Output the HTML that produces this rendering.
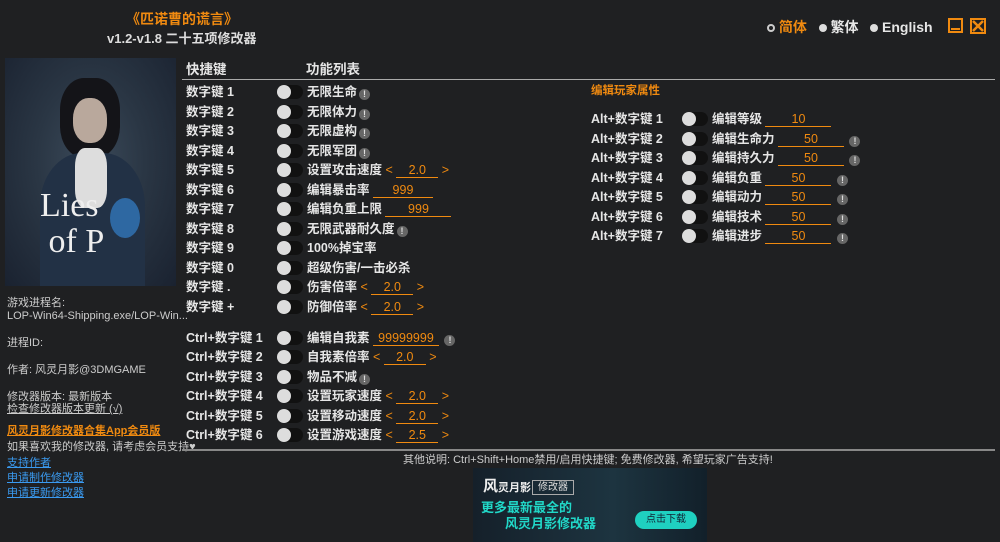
<!DOCTYPE html>
<html><head><meta charset="utf-8"><style>
*{margin:0;padding:0;box-sizing:border-box}
body{width:1000px;height:542px;background:#1f2022;font-family:"Liberation Sans","Noto Sans CJK SC",sans-serif;color:#e6e6e6;position:relative;overflow:hidden;font-size:12px;line-height:14px}
.a{position:absolute;white-space:nowrap}
.b{font-weight:bold}
.o{color:#f08a10}
.k{position:absolute;left:186px;font-weight:bold;font-size:12.5px;line-height:14px}
.tg{position:absolute;left:277px;width:26px;height:14px;background:#111;border-radius:7px}
.tg:before{content:"";position:absolute;left:0;top:0;width:14px;height:14px;border-radius:50%;background:#ddd}
.l{position:absolute;font-weight:bold;font-size:12.5px;line-height:14px;white-space:nowrap}
.ex{display:inline-block;width:11px;height:11px;border-radius:50%;background:#666;color:#ddd;font-size:9px;text-align:center;line-height:11px;vertical-align:-1px;margin-left:2px}
.v{display:inline-block;border-bottom:1px solid #f08a10;color:#f08a10;text-align:center;font-weight:normal;line-height:13px}
.ar{color:#f08a10;font-weight:normal}
.s{font-size:11px;color:#ccc;line-height:13px}
.u{text-decoration:underline}
.bl{color:#3a9af0;text-decoration:underline}
</style></head><body>
<div class="a b o" style="left:126px;top:11px;font-size:14px;line-height:17px">《匹诺曹的谎言》</div>
<div class="a b" style="left:107px;top:31px;font-size:13px;line-height:16px;color:#ddd">v1.2-v1.8 二十五项修改器</div>
<div class="a b" style="left:767px;top:19px;font-size:14px;line-height:17px"><span style="display:inline-block;width:8px;height:8px;border:2px solid #ccc;border-radius:50%"></span> <span class="o">简体</span>&nbsp;&nbsp; <span style="display:inline-block;width:8px;height:8px;background:#ddd;border-radius:50%"></span> 繁体&nbsp;&nbsp; <span style="display:inline-block;width:8px;height:8px;background:#ddd;border-radius:50%"></span> English</div>
<div class="a" style="left:948px;top:18px;width:15px;height:15px;border:2px solid #f08a10"><div style="position:absolute;left:1px;right:1px;bottom:1px;height:2px;background:#f08a10"></div></div>
<svg class="a" style="left:970px;top:18px" width="16" height="16"><rect x="1" y="1" width="14" height="14" fill="none" stroke="#f08a10" stroke-width="2"/><path d="M3 3L13 13M13 3L3 13" stroke="#f08a10" stroke-width="2.5"/></svg>
<div class="a" style="left:5px;top:58px;width:171px;height:228px;overflow:hidden;background:radial-gradient(ellipse at 50% 45%,#3b4a5a 0%,#2a3644 45%,#1a2230 100%)">
<div style="position:absolute;left:55px;top:20px;width:60px;height:80px;border-radius:40%;background:#141418"></div>
<div style="position:absolute;left:68px;top:40px;width:34px;height:45px;border-radius:45%;background:#b9a89c"></div>
<div style="position:absolute;left:35px;top:95px;width:105px;height:133px;border-radius:40% 40% 0 0;background:#223145"></div>
<div style="position:absolute;left:70px;top:90px;width:32px;height:60px;background:#ddd;border-radius:30%"></div>
<div style="position:absolute;left:105px;top:140px;width:30px;height:40px;border-radius:50%;background:#3aa0ff;opacity:.5"></div>
<div style="position:absolute;left:35px;top:130px;font-family:'Liberation Serif',serif;font-size:34px;color:#eee;line-height:36px">Lies<br>&nbsp;of P</div>
</div>
<div class="a s" style="left:7px;top:297px">游戏进程名:</div>
<div class="a s" style="left:7px;top:310px">LOP-Win64-Shipping.exe/LOP-Win...</div>
<div class="a s" style="left:7px;top:337px">进程ID:</div>
<div class="a s" style="left:7px;top:364px">作者: 风灵月影@3DMGAME</div>
<div class="a s" style="left:7px;top:391px">修改器版本: 最新版本</div>
<div class="a s u" style="left:7px;top:403px">检查修改器版本更新 (√)</div>
<div class="a s u o b" style="left:7px;top:425px;color:#f08a10">风灵月影修改器合集App会员版</div>
<div class="a s" style="left:7px;top:441px">如果喜欢我的修改器, 请考虑会员支持♥</div>
<div class="a s bl" style="left:7px;top:457px">支持作者</div>
<div class="a s bl" style="left:7px;top:472px">申请制作修改器</div>
<div class="a s bl" style="left:7px;top:487px">申请更新修改器</div>
<div class="a b" style="left:186px;top:62px;font-size:13.5px;line-height:16px">快捷键</div>
<div class="a b" style="left:306px;top:62px;font-size:13.5px;line-height:16px">功能列表</div>
<div class="a" style="left:182px;top:79px;width:813px;height:1px;background:#aaa"></div>
<div class="a" style="left:182px;top:449px;width:813px;height:2px;background:#888"></div>
<div class="a b o" style="left:591px;top:84px;font-size:11.5px">编辑玩家属性</div>
<div class="k" style="top:85px">数字键 1</div><div class="tg" style="top:85px"></div><div class="l" style="left:307px;top:85px">无限生命<span class="ex">!</span></div>
<div class="k" style="top:105px">数字键 2</div><div class="tg" style="top:105px"></div><div class="l" style="left:307px;top:105px">无限体力<span class="ex">!</span></div>
<div class="k" style="top:124px">数字键 3</div><div class="tg" style="top:124px"></div><div class="l" style="left:307px;top:124px">无限虚构<span class="ex">!</span></div>
<div class="k" style="top:144px">数字键 4</div><div class="tg" style="top:144px"></div><div class="l" style="left:307px;top:144px">无限军团<span class="ex">!</span></div>
<div class="k" style="top:163px">数字键 5</div><div class="tg" style="top:163px"></div><div class="l" style="left:307px;top:163px">设置攻击速度 <span class="ar">&lt;</span> <span class="v" style="width:42px">2.0</span> <span class="ar">&gt;</span></div>
<div class="k" style="top:183px">数字键 6</div><div class="tg" style="top:183px"></div><div class="l" style="left:307px;top:183px">编辑暴击率 <span class="v" style="width:60px">999</span></div>
<div class="k" style="top:202px">数字键 7</div><div class="tg" style="top:202px"></div><div class="l" style="left:307px;top:202px">编辑负重上限 <span class="v" style="width:66px">999</span></div>
<div class="k" style="top:222px">数字键 8</div><div class="tg" style="top:222px"></div><div class="l" style="left:307px;top:222px">无限武器耐久度<span class="ex">!</span></div>
<div class="k" style="top:241px">数字键 9</div><div class="tg" style="top:241px"></div><div class="l" style="left:307px;top:241px">100%掉宝率</div>
<div class="k" style="top:261px">数字键 0</div><div class="tg" style="top:261px"></div><div class="l" style="left:307px;top:261px">超级伤害/一击必杀</div>
<div class="k" style="top:280px">数字键 .</div><div class="tg" style="top:280px"></div><div class="l" style="left:307px;top:280px">伤害倍率 <span class="ar">&lt;</span> <span class="v" style="width:42px">2.0</span> <span class="ar">&gt;</span></div>
<div class="k" style="top:300px">数字键 +</div><div class="tg" style="top:300px"></div><div class="l" style="left:307px;top:300px">防御倍率 <span class="ar">&lt;</span> <span class="v" style="width:42px">2.0</span> <span class="ar">&gt;</span></div>
<div class="k" style="top:331px">Ctrl+数字键 1</div><div class="tg" style="top:331px"></div><div class="l" style="left:307px;top:331px">编辑自我素 <span class="v" style="width:66px">99999999</span> <span class="ex">!</span></div>
<div class="k" style="top:350px">Ctrl+数字键 2</div><div class="tg" style="top:350px"></div><div class="l" style="left:307px;top:350px">自我素倍率 <span class="ar">&lt;</span> <span class="v" style="width:42px">2.0</span> <span class="ar">&gt;</span></div>
<div class="k" style="top:370px">Ctrl+数字键 3</div><div class="tg" style="top:370px"></div><div class="l" style="left:307px;top:370px">物品不减<span class="ex">!</span></div>
<div class="k" style="top:389px">Ctrl+数字键 4</div><div class="tg" style="top:389px"></div><div class="l" style="left:307px;top:389px">设置玩家速度 <span class="ar">&lt;</span> <span class="v" style="width:42px">2.0</span> <span class="ar">&gt;</span></div>
<div class="k" style="top:409px">Ctrl+数字键 5</div><div class="tg" style="top:409px"></div><div class="l" style="left:307px;top:409px">设置移动速度 <span class="ar">&lt;</span> <span class="v" style="width:42px">2.0</span> <span class="ar">&gt;</span></div>
<div class="k" style="top:428px">Ctrl+数字键 6</div><div class="tg" style="top:428px"></div><div class="l" style="left:307px;top:428px">设置游戏速度 <span class="ar">&lt;</span> <span class="v" style="width:42px">2.5</span> <span class="ar">&gt;</span></div>
<div class="k" style="left:591px;top:112px">Alt+数字键 1</div><div class="tg" style="left:682px;top:112px"></div><div class="l" style="left:712px;top:112px">编辑等级 <span class="v" style="width:66px">10</span></div>
<div class="k" style="left:591px;top:132px">Alt+数字键 2</div><div class="tg" style="left:682px;top:132px"></div><div class="l" style="left:712px;top:132px">编辑生命力 <span class="v" style="width:66px">50</span> <span class="ex">!</span></div>
<div class="k" style="left:591px;top:151px">Alt+数字键 3</div><div class="tg" style="left:682px;top:151px"></div><div class="l" style="left:712px;top:151px">编辑持久力 <span class="v" style="width:66px">50</span> <span class="ex">!</span></div>
<div class="k" style="left:591px;top:171px">Alt+数字键 4</div><div class="tg" style="left:682px;top:171px"></div><div class="l" style="left:712px;top:171px">编辑负重 <span class="v" style="width:66px">50</span> <span class="ex">!</span></div>
<div class="k" style="left:591px;top:190px">Alt+数字键 5</div><div class="tg" style="left:682px;top:190px"></div><div class="l" style="left:712px;top:190px">编辑动力 <span class="v" style="width:66px">50</span> <span class="ex">!</span></div>
<div class="k" style="left:591px;top:210px">Alt+数字键 6</div><div class="tg" style="left:682px;top:210px"></div><div class="l" style="left:712px;top:210px">编辑技术 <span class="v" style="width:66px">50</span> <span class="ex">!</span></div>
<div class="k" style="left:591px;top:229px">Alt+数字键 7</div><div class="tg" style="left:682px;top:229px"></div><div class="l" style="left:712px;top:229px">编辑进步 <span class="v" style="width:66px">50</span> <span class="ex">!</span></div>
<div class="a s" style="left:403px;top:454px;color:#ccc">其他说明: Ctrl+Shift+Home禁用/启用快捷键; 免费修改器, 希望玩家广告支持!</div>
<div class="a" style="left:473px;top:468px;width:234px;height:74px;background:linear-gradient(90deg,#15202a,#1d3440 60%,#12202a)">
<div style="position:absolute;left:10px;top:10px;font-size:15px;font-weight:bold;color:#eee;line-height:18px">风<span style="font-size:11px">灵月影</span></div>
<div style="position:absolute;left:59px;top:12px;border:1px solid #aaa;padding:0 5px;font-size:10px;color:#ddd;line-height:13px">修改器</div>
<div style="position:absolute;left:8px;top:32px;font-size:13px;font-weight:bold;color:#21d8c8;line-height:15px">更多最新最全的</div>
<div style="position:absolute;left:32px;top:48px;font-size:13px;font-weight:bold;color:#21d8c8;line-height:15px">风灵月影修改器</div>
<div style="position:absolute;left:162px;top:43px;width:62px;height:18px;border-radius:9px;background:#1fd0c0;color:#123;font-size:10px;text-align:center;line-height:18px">点击下载</div>
</div>
</body></html>
